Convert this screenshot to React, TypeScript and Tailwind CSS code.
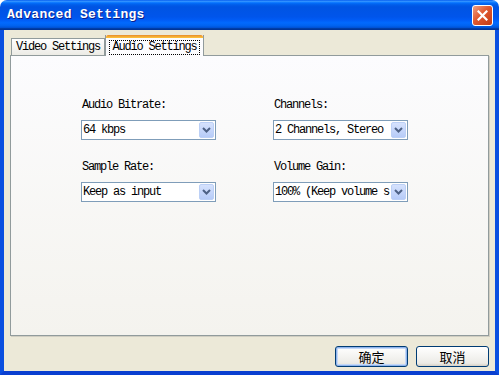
import React from "react";

const mono = { fontFamily: '"Liberation Mono", "DejaVu Sans Mono", monospace' };

function Chevron() {
  return (
    <svg width="9" height="6" viewBox="0 0 9 6">
      <path d="M1 1 L4.5 4.5 L8 1" stroke="#4d6185" strokeWidth="2" fill="none" />
    </svg>
  );
}

function Select({ value }: { value: string }) {
  return (
    <div className="flex h-[20px] w-[135px] items-stretch border border-[#7f9db9] bg-white">
      <div
        className="flex flex-1 items-center overflow-hidden whitespace-nowrap pl-[1px] text-[12px] tracking-[-1.2px] text-black"
        style={mono}
      >
        {value}
      </div>
      <div className="m-[1px] flex w-[15px] items-center justify-center rounded-[2px] border border-[#bcd0f6] bg-[linear-gradient(to_bottom,#d6e2fd,#b6cbf8)]">
        <Chevron />
      </div>
    </div>
  );
}

function Field({ label, value }: { label: string; value: string }) {
  return (
    <div className="flex flex-col">
      <div className="h-[14px] pl-[1px] text-[12px] leading-[14px] tracking-[-1.2px] text-black" style={mono}>
        {label}
      </div>
      <div className="mt-[8px]">
        <Select value={value} />
      </div>
    </div>
  );
}

export default function App() {
  return (
    <div className="flex h-[375px] w-[499px] flex-col overflow-hidden bg-white">
      {/* Title bar */}
      <div className="relative flex h-[30px] items-center rounded-t-[7px] bg-[linear-gradient(to_bottom,#0058ee_0%,#3593ff_4%,#288eff_6%,#127dff_8%,#036ffc_10%,#0262ee_14%,#0057e5_20%,#0054e3_24%,#0055eb_56%,#005bf5_66%,#026afe_76%,#0062ef_86%,#0052d6_92%,#0040ab_94%,#003092_100%)] pl-[7px]">
        <span
          className="text-[13px] font-bold tracking-[0.3px] text-white [text-shadow:1px_1px_0_#0a1e8c]"
          style={mono}
        >
          Advanced Settings
        </span>
        <div className="absolute right-[6px] top-[5px] flex h-[21px] w-[21px] items-center justify-center rounded-[3px] border border-white bg-[linear-gradient(135deg,#f0a184,#e0582f_45%,#c43c15)]">
          <svg width="11" height="11" viewBox="0 0 11 11">
            <path d="M1.5 1.5 L9.5 9.5 M9.5 1.5 L1.5 9.5" stroke="white" strokeWidth="2.2" strokeLinecap="square" />
          </svg>
        </div>
      </div>

      {/* Body */}
      <div className="flex flex-1 flex-col border-x-4 border-b-4 border-x-[#0a4fe0] border-b-[#0a3fd0] bg-[#ece9d8] px-[6px] pt-[5px]">
        {/* Tabs */}
        <div className="relative z-10 flex h-[20px] items-end pl-[1px]">
          <div
            className="flex h-[17px] w-[94px] items-center justify-center border border-b-0 border-[#919b9c] bg-[linear-gradient(to_bottom,#ffffff,#ecebe5)] text-[12px] tracking-[-1.2px] text-black"
            style={mono}
          >
            Video Settings
          </div>
          <div className="mb-[-1px] flex h-[21px] w-[99px] flex-col border-x border-[#919b9c] bg-[#fcfcfe]">
            <div className="h-[3px] rounded-t-[2px] bg-[linear-gradient(to_bottom,#e68b2c,#ffc73c)]" />
            <div className="flex flex-1 items-center justify-center">
              <span
                className="border border-dotted border-black px-[2px] text-[12px] leading-[13px] tracking-[-1.2px] text-black"
                style={mono}
              >
                Audio Settings
              </span>
            </div>
          </div>
        </div>

        {/* Panel */}
        <div className="h-[281px] border border-[#919b9c] bg-[linear-gradient(to_bottom,#fcfcfe,#f4f3ee)] pl-[70px] pt-[42px] shadow-[1px_1px_0_#d0cec2]">
          <div className="grid grid-cols-[135px_135px] gap-x-[57px] gap-y-[20px]">
            <Field label="Audio Bitrate:" value="64 kbps" />
            <Field label="Channels:" value="2 Channels, Stereo" />
            <Field label="Sample Rate:" value="Keep as input" />
            <Field label="Volume Gain:" value="100% (Keep volume s" />
          </div>
        </div>

        {/* Buttons */}
        <div className="mt-[10px] flex justify-end gap-[8px] pr-[0px]">
          <button
            className="flex h-[21px] w-[73px] items-center justify-center rounded-[3px] border border-[#003c74] bg-[linear-gradient(to_bottom,#ffffff,#ecebe6_85%,#d6d0c5)] text-[13px] text-black shadow-[inset_0_0_0_1px_#8fb4ec,inset_0_0_0_2px_#c4d8f7]"
            style={{ fontFamily: '"Noto Sans CJK SC", sans-serif' }}
          >
            确定
          </button>
          <button
            className="flex h-[21px] w-[73px] items-center justify-center rounded-[3px] border border-[#003c74] bg-[linear-gradient(to_bottom,#ffffff,#ecebe6_85%,#d6d0c5)] text-[13px] text-black"
            style={{ fontFamily: '"Noto Sans CJK SC", sans-serif' }}
          >
            取消
          </button>
        </div>
      </div>
    </div>
  );
}
